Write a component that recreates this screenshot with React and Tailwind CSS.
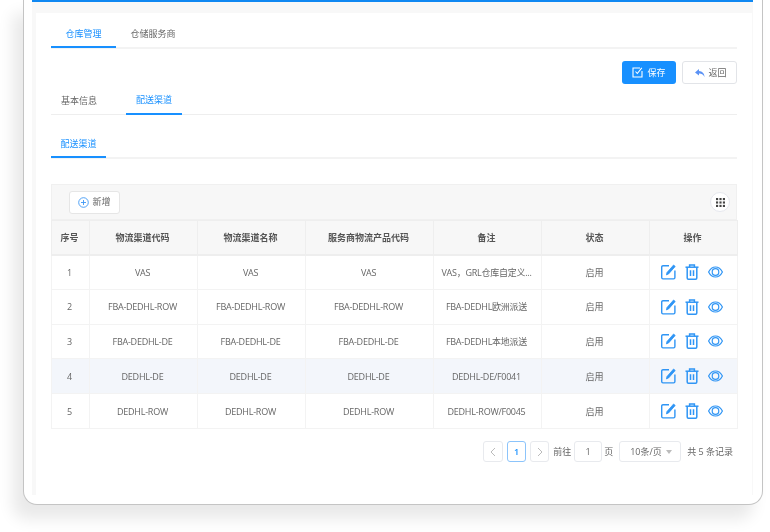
// App.jsx
import React from 'react';

const rows = [
  { id: 1, code: 'VAS', name: 'VAS', product: 'VAS', note: 'VAS，GRL仓库自定义...' },
  { id: 2, code: 'FBA-DEDHL-ROW', name: 'FBA-DEDHL-ROW', product: 'FBA-DEDHL-ROW', note: 'FBA-DEDHL欧洲派送' },
  { id: 3, code: 'FBA-DEDHL-DE', name: 'FBA-DEDHL-DE', product: 'FBA-DEDHL-DE', note: 'FBA-DEDHL本地派送' },
  { id: 4, code: 'DEDHL-DE', name: 'DEDHL-DE', product: 'DEDHL-DE', note: 'DEDHL-DE/F0041', hover: true },
  { id: 5, code: 'DEDHL-ROW', name: 'DEDHL-ROW', product: 'DEDHL-ROW', note: 'DEDHL-ROW/F0045' },
];

const headers = ['序号', '物流渠道代码', '物流渠道名称', '服务商物流产品代码', '备注', '状态', '操作'];
const widths = ['w-[38px]', 'w-[108px]', 'w-[108px]', 'w-[128px]', 'w-[108px]', 'w-[108px]', 'w-[88px]'];

function EditIcon() {
  return (
    <svg width="15" height="16" viewBox="0 0 15 16" fill="none" stroke="#2f95f5" strokeWidth="1.4">
      <path d="M8 1.7H2a1.3 1.3 0 0 0-1.3 1.3v10.6A1.3 1.3 0 0 0 2 14.9h10.6a1.3 1.3 0 0 0 1.3-1.3V6.5" />
      <path d="M12.6 1 14.2 2.5 7.6 9.9 5.4 10.9 6 8.5Z" fill="#2f95f5" strokeWidth="0.8" />
    </svg>
  );
}

function TrashIcon() {
  return (
    <svg width="14" height="16" viewBox="0 0 14 16" fill="none" stroke="#2f95f5" strokeWidth="1.5">
      <path d="M0.5 3.2H13.5" />
      <path d="M4.6 3V1H9.4V3" />
      <path d="M2.2 3.2V14a1.2 1.2 0 0 0 1.2 1.2h7.2a1.2 1.2 0 0 0 1.2-1.2V3.2" />
      <path d="M5.5 6.2V12M8.5 6.2V12" />
    </svg>
  );
}

function EyeIcon() {
  return (
    <svg width="15" height="12" viewBox="0 0 15 12" fill="none" stroke="#2f95f5" strokeWidth="1.2">
      <path d="M0.6 6C2.2 2.8 4.7 1 7.5 1s5.3 1.8 6.9 5c-1.6 3.2-4.1 5-6.9 5S2.2 9.200.6 6Z" />
      <circle cx="7.500" cy="6" r="3.300" />
    </svg>
  );
}

function GridIcon() {
  const dots = [];
  for (let y = 0; y < 3; y++) {
    for (let x = 0; x < 3; x++) {
      dots.push(<rect key={`${x}-${y}`} x={x * 3.2} y={y * 3.2} width="2" height="2" fill="#444" />);
    }
  }
  return (
    <svg width="9" height="9" viewBox="0 0 8.400 8.400">
      {dots}
    </svg>
  );
}

function Tab({ label, active, width }) {
  return (
    <div className={`${width} h-[29px] flex items-center justify-center -mb-[2px] border-b-2 ${active ? 'border-[#1890ff] text-[#1890ff]' : 'border-transparent text-[#666]'}`}>
      {label}
    </div>
  );
}

export default function App() {
  return (
    <div className="w-[770px] h-[532px] overflow-hidden bg-white pl-[23px] text-[9px] text-[#666]" style={{ fontFamily: '"Open Sans", "Noto Sans CJK SC", sans-serif' }}>
      <div className="w-[740px] h-[505px] pl-2 pr-[9px] bg-white border-x border-b border-[#c4c4c4] rounded-b-[14px] shadow-[-10px_14px_16px_rgba(0,0,0,0.09)]">
        <div className="h-[2px] bg-[#1088f2]" />
        <div className="h-[493px] pt-[11px] pl-1 pr-px bg-[#f8f8f8]">
          <div className="h-full bg-white pl-[15px] pr-[15px] pt-[5px] blur-[0.4px]">
            {/* top tabs */}
            <div className="flex border-b-2 border-[#f3f3f3] h-[30px] mt-px">
              <Tab label="仓库管理" active width="w-[65px] pt-[2px]" />
              <Tab label="仓储服务商" width="w-[74px] pt-[2px]" />
            </div>

            <div className="flex justify-end gap-[6px] mt-[12px] h-[23px]">
              <button className="w-[54px] h-[23px] rounded-[3px] bg-[#1890ff] text-white flex items-center justify-center gap-1">
                <svg width="11" height="11" viewBox="0 0 11 11" fill="none" stroke="white" strokeWidth="1.1">
                  <path d="M8 1H1v9h9V4" />
                  <path d="M3.500 4.500 5.300 6.500 9.800 .8" />
                </svg>
                保存
              </button>
              <button className="w-[55px] h-[23px] rounded-[3px] bg-white border border-[#e2e4e8] flex items-center justify-center gap-[3px] pl-[3px]">
                <svg width="10" height="8" viewBox="0 0 10 8" fill="#5b92f5">
                  <path d="M4 0 0 3.400 4 6.500V4.600C6 4.400 8 5.200 9.500 8 9.500 4.500 7 2.300 4 2.100Z" />
                </svg>
                返回
              </button>
            </div>

            {/* second tabs */}
            <div className="flex border-b border-[#eeeeee] h-[31px] items-end">
              <Tab label="基本信息" width="w-[56px] mr-[19px]" />
              <Tab label="配送渠道" active width="w-[56px] -mb-px" />
            </div>

            {/* third tabs */}
            <div className="flex border-b-2 border-[#f3f3f3] h-[30px] mt-[14px]">
              <Tab label="配送渠道" active width="w-[55px] pt-[2px]" />
            </div>

            {/* toolbar */}
            <div className="mt-[25px] w-[686px] h-[36px] bg-[#f7f7f7] border border-[#f0f0f0] flex items-center justify-between pl-[17px] pr-[6px]">
              <button className="w-[51px] h-[23px] bg-white border border-[#e6e6e6] rounded-[3px] flex items-center justify-center gap-[3px]">
                <svg width="11" height="11" viewBox="0 0 11 11" fill="none" stroke="#3d97f5" strokeWidth="0.9">
                  <circle cx="5.500" cy="5.500" r="4.800" />
                  <path d="M5.500 3V8M3 5.500H8" />
                </svg>
                新增
              </button>
              <div className="w-5 h-5 rounded-full bg-white border border-[#e6e8ee] flex items-center justify-center">
                <GridIcon />
              </div>
            </div>

            {/* table */}
            <table className="w-[686px] table-fixed border-collapse text-center">
              <thead>
                <tr className="h-[34px] bg-[#f7f7f7] text-[#555] font-semibold">
                  {headers.map((h, i) => (
                    <th key={h} className={`${widths[i]} pr-[2px] border border-[#eeeeee] border-b-2 font-semibold`}>{h}</th>
                  ))}
                </tr>
              </thead>
              <tbody>
                {rows.map((row) => (
                  <tr key={row.id} className={`h-[34.800px] ${row.hover ? 'bg-[#f3f6fb]' : 'bg-white'}`}>
                    <td className="pr-[2px] pt-px border border-[#f3f3f3]">{row.id}</td>
                    <td className="pr-[2px] pt-px border border-[#f3f3f3] tracking-[-0.25px]">{row.code}</td>
                    <td className="pr-[2px] pt-px border border-[#f3f3f3] tracking-[-0.25px]">{row.name}</td>
                    <td className="pr-[2px] pt-px border border-[#f3f3f3] tracking-[-0.25px]">{row.product}</td>
                    <td className="pr-[2px] pt-px border border-[#f3f3f3] tracking-[-0.25px]">{row.note}</td>
                    <td className="pr-[2px] pt-px border border-[#f3f3f3]">启用</td>
                    <td className="pr-1 border border-[#f3f3f3]">
                      <div className="flex items-center justify-center gap-[9px]">
                        <EditIcon />
                        <TrashIcon />
                        <EyeIcon />
                      </div>
                    </td>
                  </tr>
                ))}
              </tbody>
            </table>

            {/* pagination */}
            <div className="flex items-center justify-end mt-[12px] h-[22px] w-[682px]">
              <div className="w-5 h-[21px] border border-[#e8eaee] rounded-[3px] flex items-center justify-center">
                <svg width="6" height="10" viewBox="0 0 6 10" fill="none" stroke="#bbb"><path d="M5 1 1 5l4 4" /></svg>
              </div>
              <div className="w-[19px] h-[21px] ml-1 border border-[#8cc4fb] rounded-[3px] flex items-center justify-center text-[#1890ff] font-semibold">1</div>
              <div className="w-[19px] h-[21px] ml-1 border border-[#e8eaee] rounded-[3px] flex items-center justify-center">
                <svg width="6" height="10" viewBox="0 0 6 10" fill="none" stroke="#bbb"><path d="m1 1 4 4-4 4" /></svg>
              </div>
              <span className="ml-1">前往</span>
              <div className="w-7 h-[21px] ml-[3px] border border-[#e8eaee] rounded-[3px] flex items-center justify-center">1</div>
              <span className="ml-[2px]">页</span>
              <div className="w-[62px] h-[21px] ml-[6px] border border-[#e8eaee] rounded-[3px] flex items-center justify-between pl-[10px] pr-[8px]">
                10条/页
                <svg width="6" height="4" viewBox="0 0 6 4" fill="#bbb"><path d="M0 0h6L3 4Z" /></svg>
              </div>
              <span className="ml-[6px]">共 5 条记录</span>
            </div>
          </div>
        </div>
      </div>
    </div>
  );
}
